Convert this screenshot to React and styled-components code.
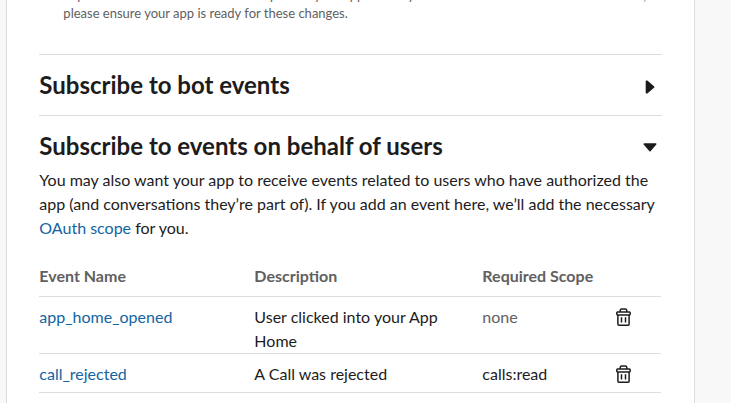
import React from "react";
import styled, { createGlobalStyle } from "styled-components";

const Global = createGlobalStyle`
  * { box-sizing: border-box; }
  body { margin: 0; background: #f8f8f8; color: #1d1c1d; font-family: Lato, sans-serif; font-size: 16px; line-height: 24px; overflow: hidden; }
  p, h2 { margin: 0; }
`;
const Page = styled.div`height: 403px; overflow: hidden; padding-left: 6px;`;
const Card = styled.main`width: 689px; height: 403px; overflow: hidden; background: #fff; border: solid #ddd; border-width: 0 1px; padding: 0 32px 0 32.35px;`;
const Note = styled.p`
  margin: -14px 0 0; padding-left: 24px; height: 69px; border-bottom: 1px solid #ddd;
  font-size: 13px; line-height: 18px; color: #616061; white-space: nowrap;
`;
const Section = styled.section`border-bottom: ${(p) => (p.$open ? "0" : "1px solid #ddd")};`;
const Head = styled.div`
  display: flex; justify-content: space-between; align-items: center;
  height: ${(p) => (p.$open ? 52 : 60)}px;
  padding: ${(p) => (p.$open ? "8px 4.7px 0 0" : "0 6.7px 0 0")};
`;
const Title = styled.h2`font-size: 24px; line-height: 30px; font-weight: 700;`;
const Arrow = styled.svg`display: block; margin-top: 3px; fill: #1d1c1d; stroke: #1d1c1d; stroke-width: 1.4; stroke-linejoin: round;`;
const Text = styled.p`white-space: nowrap;`;
const Link = styled.a`color: #1264a3; text-decoration: none;`;
const Table = styled.div`margin: 24px 1px 0 0;`;
const Row = styled.div`
  display: grid; grid-template-columns: 215px 228px 134px 1fr; border-bottom: 1px solid #ddd;
  height: ${(p) => p.$h}px; padding-top: ${(p) => p.$top}px;
  font-weight: ${(p) => (p.$head ? 700 : 400)}; color: ${(p) => (p.$head ? "#616061" : "inherit")};
`;
const Cell = styled.div`width: ${(p) => (p.$narrow ? "200px" : "auto")}; color: ${(p) => (p.$muted ? "#616061" : "inherit")};`;
const Icon = styled.svg`display: block; width: 15px; height: 18px; margin-top: 3px; fill: none; stroke: #1d1c1d; stroke-width: 1.5;`;

const Trash = () => (
  <Icon viewBox="0 0 15 18">
    <path d="M4.2 4V2.6Q4.2 1 5.8 1h3.4q1.6 0 1.6 1.6V4" />
    <rect x=".8" y="3.9" width="13.4" height="3" rx=".8" />
    <path d="M1.9 7v9.2q0 1 1 1h9.2q1 0 1-1V7M5.5 9.3v5.2M9.5 9.3v5.2" />
  </Icon>
);

export default function App() {
  return (
    <Page><Global />
      <Card>
        <Note>Expect new events to be sent as adapted to your app will only receive the events if users have allowed,<br />please ensure your app is ready for these changes.</Note>
        <Section>
          <Head><Title>Subscribe to bot events</Title><Arrow width="10" height="14"><path d="M1.4 1.2h.8L8.8 7l-6.6 5.8h-.8z" /></Arrow></Head>
        </Section>
        <Section $open>
          <Head $open><Title>Subscribe to events on behalf of users</Title><Arrow width="14" height="9"><path d="M1.2 1h11.6L7 7.8z" /></Arrow></Head>
          <Text>You may also want your app to receive events related to users who have authorized the<br />app (and conversations they’re part of). If you add an event here, we’ll add the necessary<br /><Link>OAuth scope</Link> for you.</Text>
          <Table>
            <Row $head $h={33} $top={0}><Cell>Event Name</Cell><Cell>Description</Cell><Cell>Required Scope</Cell></Row>
            <Row $h={57} $top={8}><Cell><Link>app_home_opened</Link></Cell><Cell $narrow>User clicked into your App Home</Cell><Cell $muted>none</Cell><Trash /></Row>
            <Row $h={39} $top={8}><Cell><Link>call_rejected</Link></Cell><Cell>A Call was rejected</Cell><Cell>calls:read</Cell><Trash /></Row>
          </Table>
        </Section>
      </Card>
    </Page>
  );
}
